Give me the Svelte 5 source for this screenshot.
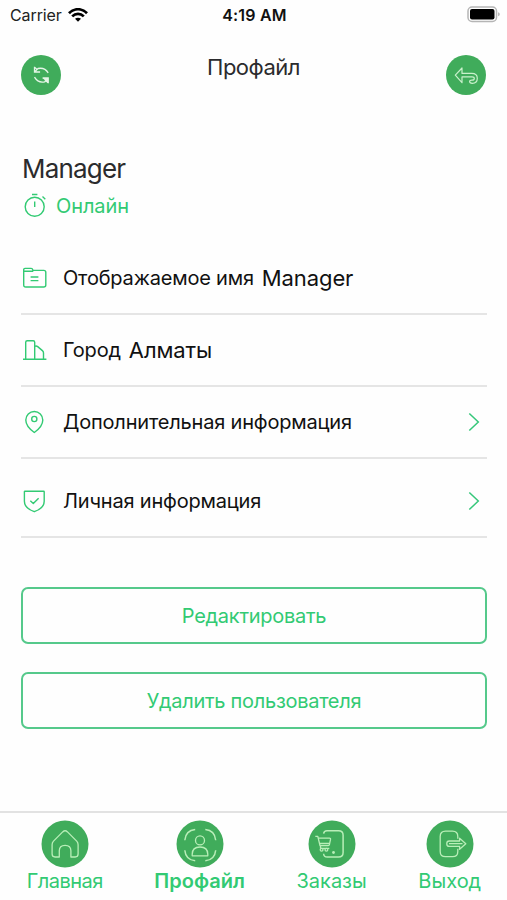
<script lang="ts">
	interface Row {
		icon: string;
		label: string;
		value?: string;
		link?: boolean;
		tall?: boolean;
	}

	interface Tab {
		id: string;
		label: string;
	}

	const rows: Row[] = [
		{ icon: 'folder', label: 'Отображаемое имя', value: 'Manager' },
		{ icon: 'city', label: 'Город', value: 'Алматы' },
		{ icon: 'pin', label: 'Дополнительная информация', link: true },
		{ icon: 'shield', label: 'Личная информация', link: true, tall: true }
	];

	const tabs: Tab[] = [
		{ id: 'home', label: 'Главная' },
		{ id: 'profile', label: 'Профайл' },
		{ id: 'orders', label: 'Заказы' },
		{ id: 'exit', label: 'Выход' }
	];

	let active = $state('profile');
</script>

<div class="screen">
	<div class="status-bar">
		<div class="carrier">
			Carrier
			<svg width="20" height="14" viewBox="0 0 20 14" fill="none" stroke="#000" stroke-width="2.7">
				<path d="M1 5.2C6-.1 14-.1 19 5.2M4.2 8.4c3.3-3.3 8.3-3.3 11.6 0" />
				<path d="M10 13.8l-3-3c1.7-1.5 4.3-1.5 6 0z" fill="#000" stroke="none" />
			</svg>
		</div>
		<div class="clock">4:19 AM</div>
		<svg class="battery" width="34" height="17" viewBox="0 0 34 17">
			<rect x="1" y="1" width="28.5" height="14.5" rx="4" fill="#fff" stroke="#b5b5b5" stroke-width="1.5" />
			<rect x="3" y="3" width="24.5" height="10.5" rx="2" fill="#000" />
			<path d="M31.2 6.2c2 .8 2 3.2 0 4z" fill="#aaa" />
		</svg>
	</div>

	<header class="header">
		<button class="round" aria-label="Обновить">
			<svg width="40" height="40" viewBox="0 0 40 40" fill="none" stroke="#e4f5e6" stroke-width="1.3">
				<path d="M13.5 11.7V17h5.6M14 16.5l3-3c4-.8 8 .7 10.2 4.3M13.8 12.5l2.4 2" />
				<path d="M27.2 28.3V23h-5.6M26.7 23.5l-3 3.3c-4 .9-8-.9-10.2-4.6M26.9 27.5l-2.4-2" />
				<path d="M27.2 23h-5.6l2.3 2.2 3.3 3z" fill="#e4f5e6" stroke="none" />
			</svg>
		</button>
		<h1 class="title">Профайл</h1>
		<button class="round" aria-label="Назад">
			<svg width="40" height="40" viewBox="0 0 40 40" fill="none" stroke="#c9f0cb" stroke-width="1.2" stroke-linejoin="round">
				<path d="M9.3 20.2L16 13v5.4h9.7c3.3 0 5.6 2 5.6 4.9 0 3-2 5-5 5-1.6 0-2.7-.7-2.7-1.7 0-1.2 1-1.5 2.4-1.5 1.5 0 2.300-.6 2.300-1.700s-.9-1.500-2.300-1.500H16v5.800z" />
			</svg>
		</button>
	</header>

	<section class="user">
		<div class="name">Manager</div>
		<div class="online">
			<svg width="26" height="26" viewBox="0 0 26 26" fill="none" stroke="currentColor" stroke-width="1.4">
				<circle cx="12.7" cy="13.8" r="9.5" />
				<path d="M10 1.5h5.4M12.7 8.5v5.4M20.5 3.6l2.8 2.6" />
			</svg>
			<span>Онлайн</span>
		</div>
	</section>

	<div class="rows">
		{#each rows as row}
			<div class="row" class:tall={row.tall}>
				<svg class="row-icon" width="26" height="26" viewBox="0 0 26 26" fill="none" stroke="currentColor" stroke-width="1.4" stroke-linejoin="round">
					{#if row.icon === 'folder'}
						<path d="M2.7 6.2V4.7c0-.8.5-1.300 1.300-1.300h6.200c1 0 1.300.3 1.500 1.200l.2.8h10.900c1.300 0 2 .7 2 2V20c0 1.300-.7 2-2 2H4.700c-1.300 0-2-.7-2-2zM2.700 6.200h9.600M9.600 12h7.800M9.600 15.600h7.800" />
					{:else if row.icon === 'city'}
						<path d="M2 22.3h23.4M4.7 22.3V5.2c0-1 .5-1.5 1.5-1.5h6c1 0 1.5.5 1.5 1.5v17.1M13.7 9.4c1.1-.7 2-.6 3 .2l4.7 4c.8.7 1.1 1.4 1.1 2.4v6.3" />
					{:else if row.icon === 'pin'}
						<path d="M13.3 23.5c-2.8-2-8.5-7-8.5-12.5a8.5 8.5 0 0 1 17 0c0 5.5-5.7 10.5-8.5 12.5z" />
						<circle cx="13.3" cy="10" r="2.6" />
					{:else}
						<path d="M4 3.2h18.6c.4 0 .6.2.6.6v9.4c0 5-4.9 8.7-9.9 10.5-5-1.8-9.9-5.5-9.9-10.5V3.8c0-.4.2-.6.6-.6zM9.3 12.800l3 2.800 5.300-5.400" />
					{/if}
				</svg>
				<span class="label">{row.label}</span>
				{#if row.value}
					<span class="value">{row.value}</span>
				{/if}
				{#if row.link}
					<svg class="chevron" width="12" height="20" viewBox="0 0 12 20" fill="none" stroke="currentColor" stroke-width="1.5">
						<path d="M1.3 1.5l9 8.5-9 8.5" />
					</svg>
				{/if}
			</div>
		{/each}
	</div>

	<div class="actions">
		<button class="action">Редактировать</button>
		<button class="action">Удалить пользователя</button>
	</div>

	<nav class="tabs">
		{#each tabs as tab}
			<button class="tab {tab.id}" class:active={active === tab.id} onclick={() => (active = tab.id)}>
				<svg width="48" height="48" viewBox="0 0 48 48" fill="none" stroke="#b9eeb8" stroke-width="1.3" stroke-linejoin="round">
					<circle cx="24" cy="24" r="23.5" fill="#40ac5b" stroke="none" />
					{#if tab.id === 'home'}
						<path d="M18.3 37H14c-1.800 0-2.900-1-2.900-2.900V24.700c0-1.500.4-2.600 1.400-3.600l9.200-9.200c1.500-1.400 3.300-1.400 4.800 0l9.200 9.200c1 1 1.400 2.100 1.400 3.600v9.400c0 1.900-1.100 2.900-2.900 2.900h-4.300v-6.200c0-3.200-2.100-5.500-5.800-5.500s-5.800 2.300-5.800 5.500z" />
					{:else if tab.id === 'profile'}
						<path d="M8.8 20.2c.6-6.5 4.5-10.2 10.4-10.7M29.3 9.5c5.9.5 9.8 4.2 10.4 10.7M8.8 30.2c.6 6.3 4.5 10 10.4 10.5M29.3 40.7c5.9-.5 9.800-4.200 10.400-10.500" stroke-width="1.5" />
						<circle cx="24" cy="20.4" r="4.5" />
						<path d="M16.2 35.8v-1.500c0-4.700 3.100-7.300 7.800-7.300s7.800 2.600 7.800 7.300v1.500z" />
					{:else if tab.id === 'orders'}
						<path d="M15.6 13.7c.3-2 1.4-2.900 3.300-2.900h11.700c3 0 4.500 1.500 4.500 4.500v17.200c0 3-1.500 4.500-4.500 4.500H19.200c-2.200 0-3.400-1.200-3.600-3.300" stroke-width="1.5" />
						<path d="M7.3 16.3h2.5L12 25.500h8.300c.6 0 1-.3 1.100-.9l1.100-5.200c.1-.8-.2-1.200-1-1.200H10.500M12.500 25.500v2.800h8.800M11.500 23.300h9.700" />
						<circle cx="13.6" cy="29.8" r="1.4" />
						<circle cx="18.4" cy="29.8" r="1.4" />
						<circle cx="25.5" cy="32.5" r="1.4" fill="#b9eeb8" stroke="none" />
					{:else}
						<path d="M31.8 18.7v-2.300c0-3.500-1.800-5.300-5.300-5.300h-7c-3.500 0-5.300 1.800-5.300 5.300v15c0 3.500 1.800 5.300 5.300 5.300h7c3.500 0 5.300-1.800 5.300-5.300v-2.600" />
						<path d="M23.3 21h10.300v-2.800l6.200 5.500-6.200 5.500v-2.800H23.300c-3.400 0-3.400-5.400 0-5.400zM23 23.700h13.500" />
					{/if}
				</svg>
				<span>{tab.label}</span>
			</button>
		{/each}
	</nav>
</div>

<style>
	:global(body) { margin: 0; background: #fff; }
	.screen { width: 507px; height: 900px; display: flex; flex-direction: column; box-sizing: border-box; overflow: hidden; background: #fefefe; font-family: Inter, 'Liberation Sans', sans-serif; color: #1b1b1d; }
	button { font-family: inherit; cursor: pointer; padding: 0; border: none; background: none; }
	.status-bar { height: 30px; padding: 0 6px 0 10px; display: grid; grid-template-columns: 1fr auto 1fr; align-items: center; font-size: 16px; color: #222; }
	.carrier { display: flex; align-items: center; gap: 6px; letter-spacing: -0.1px; }
	.clock { margin-right: 2px; font-weight: 600; letter-spacing: 0.2px; color: #111; }
	.battery { justify-self: end; margin-bottom: 2px; }
	.header { display: flex; justify-content: space-between; padding: 24px 21px 0; height: 69px; }
	.round { width: 40px; height: 40px; margin-top: 1px; border-radius: 50%; background: #40ac5b; }
	.round svg { display: block; }
	.title { margin: 0; font-size: 22px; line-height: 26px; font-weight: 400; letter-spacing: -0.5px; color: #2b2b2d; }
	.user { padding: 30px 22px 0; }
	.name { font-size: 26px; line-height: 32px; letter-spacing: -0.8px; color: #2b2b2d; }
	.online { display: flex; align-items: center; gap: 8px; margin-top: 8px; height: 26px; font-size: 20px; letter-spacing: -0.1px; color: #32ca73; }
	.rows { margin: 24px 20px 0 21px; }
	.row { height: 72px; box-sizing: border-box; display: flex; align-items: center; border-bottom: 2px solid #e5e5e5; color: #111; }
	.row.tall { height: 79px; padding-top: 7px; }
	.row-icon { margin-right: 16px; color: #32ca73; }
	.label { font-size: 20px; letter-spacing: -0.19px; }
	.value { font-size: 22px; margin-left: 8px; letter-spacing: -0.1px; }
	.chevron { margin: 0 7px 0 auto; color: #35c77a; }
	.actions { display: flex; flex-direction: column; gap: 28px; padding: 49px 20px 0 21px; }
	.action { height: 57px; border: 2px solid #55c98b; border-radius: 7px; font-size: 20px; letter-spacing: -0.28px; color: #32ca73; }
	.tabs { margin-top: auto; height: 89px; box-sizing: border-box; padding: 7px 0 0 1px; border-top: 2px solid #e2e2e2; display: flex; justify-content: space-around; align-items: flex-start; }
	.tab { display: flex; flex-direction: column; align-items: center; gap: 1px; font-size: 20px; line-height: 24px; color: #32ca73; }
	.tab.home { letter-spacing: -0.55px; }
	.tab.active { font-weight: 600; }
</style>
